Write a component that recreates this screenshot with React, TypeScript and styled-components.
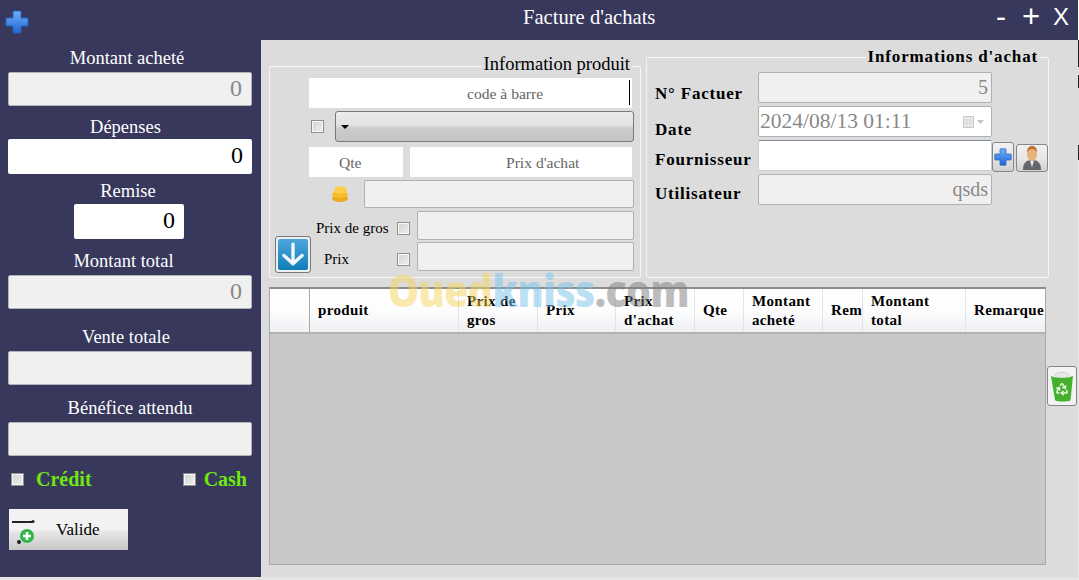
import React from "react";
import styled, { createGlobalStyle } from "styled-components";
import { Recycle } from "lucide-react";

const GlobalStyle = createGlobalStyle`
  html, body {
    margin: 0;
    padding: 0;
    background: #fff;
    font-family: "Liberation Serif", "Times New Roman", serif;
  }
`;

const Page = styled.div`
  position: relative;
  width: 1079px;
  height: 580px;
  overflow: hidden;
  display: flex;
`;

const Window = styled.div`
  width: 1078px;
  height: 580px;
  display: flex;
  flex-direction: column;
  background: #e4e4e4;
`;

const EdgeStrip = styled.div`
  width: 1px;
  height: 580px;
  background: linear-gradient(
    #fff 0 40px,
    #222 40px 67px,
    #ddd 67px 75px,
    #222 75px 88px,
    #ddd 88px 145px,
    #222 145px 160px,
    #e8e8e8 160px
  );
`;

const TitleBar = styled.div`
  height: 40px;
  flex: none;
  background: #37385c;
  display: flex;
  align-items: center;
  color: #fff;
  padding-left: 5px;
`;

const TitleIcon = styled.div`
  display: flex;
  margin-top: 4px;
`;

const Title = styled.div`
  margin-left: 494px;
  font-size: 20.6px;
  margin-top: -5px;
`;

const WindowControls = styled.div`
  margin-left: auto;
  margin-right: 9px;
  margin-top: -6px;
  display: flex;
  align-items: center;
  gap: 13px;
  font-family: "Liberation Sans", Arial, sans-serif;
  font-size: 24px;
  line-height: 24px;
`;

const Minus = styled.span`
  font-size: 30px;
  margin-right: 3px;
`;

const Plus = styled.span`
  font-size: 31px;
  line-height: 24px;
`;

const Body = styled.div`
  height: 537px;
  flex: none;
  display: flex;
`;

const Sidebar = styled.aside`
  width: 261px;
  flex: none;
  background: #37385c;
  padding: 8px 9px 0 8px;
  box-sizing: border-box;
  display: flex;
  flex-direction: column;
`;

const FieldGroup = styled.div<{ $top: number; $gap: number }>`
  margin-top: ${(p) => p.$top}px;
  display: flex;
  flex-direction: column;
  align-items: center;
  gap: ${(p) => p.$gap}px;
`;

const SideLabel = styled.div<{ $nudge: number }>`
  height: 20px;
  line-height: 20px;
  font-size: 18.5px;
  color: #fff;
  text-align: center;
  padding-right: ${(p) => p.$nudge}px;
`;

const SideField = styled.div<{ $white?: boolean; $narrow?: boolean }>`
  width: ${(p) => (p.$narrow ? "110px" : "100%")};
  height: ${(p) => (p.$white ? 35 : 34)}px;
  margin-right: ${(p) => (p.$narrow ? 2 : 0)}px;
  box-sizing: border-box;
  display: flex;
  align-items: center;
  justify-content: flex-end;
  padding: 0 9px 2px 0;
  font-size: 24px;
  border-radius: 2px;
  color: ${(p) => (p.$white ? "#000" : "#888")};
  background: ${(p) => (p.$white ? "#fff" : "#f0f0f0")};
  border: ${(p) => (p.$white ? "none" : "1px solid #b4b4b8")};
`;

const PayRow = styled.div`
  margin-top: 13px;
  height: 20px;
  display: flex;
  align-items: center;
  padding: 0 5px 0 3px;
`;

const PayOption = styled.div<{ $push?: boolean; $gap: number }>`
  display: flex;
  align-items: center;
  gap: ${(p) => p.$gap}px;
  margin-left: ${(p) => (p.$push ? "auto" : 0)};
`;

const PayLabel = styled.span`
  color: #6fe80f;
  font-weight: bold;
  font-size: 20px;
`;

const Check = styled.span`
  display: block;
  flex: none;
  width: 13px;
  height: 13px;
  box-sizing: border-box;
  border: 1px solid #8e8f8f;
  background: linear-gradient(135deg, #d2d2d2, #eeeeee);
  box-shadow: inset 0 0 0 1px #f8f8f8;
`;

const PriceCheck = styled(Check)`
  margin-top: 5px;
`;

const ValidateButton = styled.button`
  margin: 20px 0 0 1px;
  width: 119px;
  height: 41px;
  padding: 0;
  border: none;
  display: flex;
  align-items: center;
  background: linear-gradient(#f2f2f2 0 50%, #e6e6e6 56%, #c8c8c8 100%);
  font-family: inherit;
  font-size: 17px;
  color: #000;
`;

const ValidateText = styled.span`
  margin-left: 15px;
`;

const Main = styled.main`
  flex: 1;
  background: #dcdcdc;
  padding-left: 8px;
  min-width: 0;
`;

const GroupRow = styled.div`
  display: flex;
  align-items: flex-start;
  gap: 5px;
  height: 247px;
`;

const Group = styled.fieldset<{ $width: number; $top: number; $height: number }>`
  width: ${(p) => p.$width}px;
  height: ${(p) => p.$height}px;
  margin: ${(p) => p.$top}px 0 0;
  padding: 0;
  box-sizing: border-box;
  border: 1px solid #f6f6f6;
  border-radius: 2px;
  min-width: 0;
`;

const ProductLegend = styled.legend`
  margin-left: auto;
  margin-right: 8px;
  padding: 0 2px;
  height: 22px;
  line-height: 18px;
  font-size: 18.5px;
  color: #000;
`;

const PurchaseLegend = styled.legend`
  margin-left: auto;
  margin-right: 8px;
  padding: 0 2px;
  height: 20px;
  line-height: 20px;
  font-size: 17px;
  font-weight: bold;
  letter-spacing: 0.85px;
  color: #000;
`;

const FormRow = styled.div<{ $top: number; $left: number; $gap?: number }>`
  display: flex;
  align-items: center;
  margin-top: ${(p) => p.$top}px;
  padding-left: ${(p) => p.$left}px;
  gap: ${(p) => p.$gap ?? 0}px;
`;

const HintField = styled.div<{ $width: number; $pad: number }>`
  position: relative;
  width: ${(p) => p.$width}px;
  height: 30px;
  box-sizing: border-box;
  background: #fff;
  padding-left: ${(p) => p.$pad}px;
  line-height: 31px;
  font-size: 15.6px;
  color: #666;
`;

const TextCaret = styled.i`
  position: absolute;
  right: 2px;
  top: 2px;
  width: 1px;
  height: 25px;
  background: #000;
`;

const Dropdown = styled.div`
  width: 299px;
  height: 31px;
  box-sizing: border-box;
  border: 1px solid #77787c;
  border-radius: 3px;
  background: linear-gradient(#ececec 0, #e2e2e2 45%, #cccccc 55%, #c4c4c4 100%);
  display: flex;
  align-items: center;
  padding-left: 5px;
`;

const DropArrow = styled.i`
  width: 0;
  height: 0;
  border-left: 4px solid transparent;
  border-right: 4px solid transparent;
  border-top: 4px solid #000;
`;

const ReadonlyField = styled.div<{ $width: number; $height: number }>`
  width: ${(p) => p.$width}px;
  height: ${(p) => p.$height}px;
  box-sizing: border-box;
  background: #f0f0f0;
  border: 1px solid #b0b0b0;
  border-radius: 2px;
  display: flex;
  align-items: center;
  justify-content: flex-end;
  padding-right: 3px;
  color: #888;
  font-size: 20px;
`;

const PriceBlock = styled.div`
  display: flex;
  align-items: flex-end;
  padding-left: 5px;
`;

const ArrowButton = styled.button`
  width: 36px;
  height: 37px;
  padding: 2px;
  box-sizing: border-box;
  border: 1px solid #77787c;
  border-radius: 3px;
  background: #efefef;
  display: flex;
  margin-bottom: -2px;
`;

const PriceGrid = styled.div`
  display: grid;
  grid-template-columns: 81px 20px 217px;
  grid-template-rows: 29px 29px;
  row-gap: 2px;
  align-items: center;
  padding: 0 0 0 5px;
`;

const PriceLabel = styled.div<{ $indent?: number }>`
  font-size: 15px;
  margin-top: 5px;
  padding-left: ${(p) => p.$indent ?? 0}px;
  color: #000;
`;

const PurchaseGrid = styled.div`
  display: grid;
  grid-template-columns: 103px 234px auto;
  grid-template-rows: 31px 31px 31px 31px;
  row-gap: 3px;
  margin: 5px 0 0 8px;
`;

const PurchaseLabel = styled.div<{ $shift: number }>`
  font-size: 17px;
  font-weight: bold;
  letter-spacing: 0.8px;
  color: #000;
  line-height: 20px;
  padding-top: ${(p) => p.$shift}px;
  white-space: nowrap;
`;

const DateField = styled.div`
  box-sizing: border-box;
  background: #fff;
  border: 1px solid #b0b0b0;
  border-radius: 2px;
  display: flex;
  align-items: center;
  justify-content: space-between;
  padding: 0 5px 0 1px;
  font-size: 21.5px;
  color: #888;
`;

const SupplierField = styled.div`
  box-sizing: border-box;
  background: #fff;
  border: 1px solid #c4d0d8;
  border-top-color: #7c8a98;
  border-radius: 2px;
`;

const SupplierTools = styled.div`
  display: flex;
  align-items: flex-end;
  gap: 2px;
  height: 32px;
`;

const IconButton = styled.button<{ $width: number; $height: number }>`
  width: ${(p) => p.$width}px;
  height: ${(p) => p.$height}px;
  padding: 0;
  box-sizing: border-box;
  border: 1px solid #85868a;
  border-radius: 3px;
  background: linear-gradient(#f0f0f0 0, #e8e8e8 50%, #d0d0d0 100%);
  display: flex;
  align-items: center;
  justify-content: center;
`;

const TableRow = styled.div`
  display: flex;
  align-items: flex-start;
  gap: 1px;
`;

const Table = styled.div`
  width: 777px;
  height: 278px;
  box-sizing: border-box;
  border: 1px solid #a8a8a8;
  border-top: 2px solid #8c8c8c;
  display: flex;
  flex-direction: column;
`;

const HeaderRow = styled.div`
  height: 43px;
  flex: none;
  display: grid;
  grid-template-columns: 40px 149px 79px 78px 79px 49px 79px 40px 103px 1fr;
  background: linear-gradient(#fff 0, #fdfdfe 50%, #eef0f3 100%);
  border-bottom: 2px solid #b4b4b4;
`;

const HeaderCell = styled.div<{ $strong?: boolean }>`
  display: flex;
  align-items: center;
  padding: 0 10px 0 8px;
  overflow: hidden;
  box-sizing: border-box;
  font-size: 15px;
  font-weight: bold;
  letter-spacing: 0.35px;
  line-height: 19px;
  color: #000;
  border-right: 1px solid ${(p) => (p.$strong ? "#a8a8a8" : "#e2e4e8")};
`;

const LastHeaderCell = styled(HeaderCell)`
  border-right: none;
  padding-right: 0;
  white-space: nowrap;
`;

const TableBody = styled.div`
  flex: 1;
  background: #c8c8c8;
`;

const TrashButton = styled(IconButton)`
  margin-top: 79px;
  background: #f2f2f2;
`;

const Watermark = styled.div`
  position: absolute;
  left: 388px;
  top: 260px;
  font-family: "Open Sans", "Noto Sans", sans-serif;
  font-weight: 800;
  font-size: 39px;
  line-height: 60px;
  letter-spacing: -0.5px;
  opacity: 0.5;
  transform: scaleY(1.15);
  pointer-events: none;
  white-space: nowrap;
`;

const Mark = styled.span<{ $color: string }>`
  color: ${(p) => p.$color};
`;

const CrossIcon = ({ size }: { size: number }) => (
  <svg width={size} height={size} viewBox="0 0 24 24">
    <defs>
      <linearGradient id={`cross${size}`} x1="0" y1="0" x2="0" y2="1">
        <stop offset="0" stopColor="#6fb0f5" />
        <stop offset="1" stopColor="#1f66d8" />
      </linearGradient>
    </defs>
    <path
      d="M9 1h6a1 1 0 0 1 1 1v6h6a1 1 0 0 1 1 1v6a1 1 0 0 1-1 1h-6v6a1 1 0 0 1-1 1H9a1 1 0 0 1-1-1v-6H2a1 1 0 0 1-1-1V9a1 1 0 0 1 1-1h6V2a1 1 0 0 1 1-1z"
      fill={`url(#cross${size})`}
      stroke="#2a64c0"
      strokeWidth="1"
    />
  </svg>
);

const CoinsIcon = () => (
  <svg width="18" height="18" viewBox="0 0 18 18">
    <ellipse cx="9" cy="13.5" rx="8" ry="3.5" fill="#eda91e" />
    <ellipse cx="9" cy="9.5" rx="8" ry="3.5" fill="#f5bd2c" />
    <ellipse cx="9.5" cy="5" rx="6.5" ry="3.8" fill="#f9cf4a" />
  </svg>
);

const ArrowIcon = () => (
  <svg width="30" height="31" viewBox="0 0 30 30" preserveAspectRatio="none">
    <defs>
      <linearGradient id="arrowFill" x1="0" y1="0" x2="0" y2="1">
        <stop offset="0" stopColor="#4ea6dc" />
        <stop offset="1" stopColor="#0f7fb8" />
      </linearGradient>
    </defs>
    <rect width="30" height="30" rx="2" fill="url(#arrowFill)" />
    <path
      d="M15 5v19M6 16l9 8 9-8"
      fill="none"
      stroke="#f2f8fc"
      strokeWidth="3.4"
      strokeLinecap="round"
      strokeLinejoin="round"
    />
  </svg>
);

const PersonIcon = () => (
  <svg width="24" height="26" viewBox="0 0 24 26">
    <path d="M3 25c0-7 3-10 9-10s9 3 9 10z" fill="#63666a" />
    <path d="M10 15.500h4l-2 7z" fill="#e8e8e8" />
    <ellipse cx="12" cy="9" rx="5" ry="7" fill="#e8b27a" />
    <path d="M7 8c0-5 2-7 5-7s5.500 2 5 7c-1-3-2.500-4-5-4s-4 1-5 4z" fill="#b8702c" />
  </svg>
);

const CalendarIcon = () => (
  <svg width="23" height="12" viewBox="0 0 23 12">
    <rect x="0.500" y="0.500" width="10" height="11" fill="#ececec" stroke="#c8c8c8" />
    <path d="M1 4h9M1 7h9M4 1v10M7 1v10" stroke="#d8d8d8" strokeWidth="1" />
    <path d="M14 4h7l-3.500 4z" fill="#c4c4c4" />
  </svg>
);

const ValidateIcon = () => (
  <svg width="32" height="41" viewBox="0 0 32 41">
    <path d="M3 13h20" stroke="#222" strokeWidth="2" />
    <circle cx="24" cy="12.500" r="1.600" fill="#222" />
    <circle cx="10" cy="33" r="2" fill="#222" />
    <circle cx="18" cy="27" r="7" fill="#2fb84a" />
    <path d="M18 23v8M14 27h8" stroke="#fff" strokeWidth="2.600" />
  </svg>
);

const TrashIcon = () => (
  <svg width="24" height="33" viewBox="0 0 24 33">
    <path d="M5 5c1-4 13-4 14 0l-2 3H7z" fill="#e6e8e4" stroke="#bbb" strokeWidth="0.500" />
    <path d="M1 6c5 2.500 17 2.500 22 0l-2.500 24c-.2 2-15 2-15.500 0z" fill="#46b02e" />
    <Recycle x={5} y={12} size={14} color="#e4f6dc" strokeWidth={2.6} />
  </svg>
);

const sideFields = [
  { label: "Montant acheté", value: "0", top: 0, gap: 4, nudge: 6 },
  { label: "Dépenses", value: "0", top: 11, gap: 2, white: true, nudge: 9 },
  { label: "Remise", value: "0", top: 7, gap: 3, white: true, narrow: true, nudge: 4 },
  { label: "Montant total", value: "0", top: 12, gap: 4, nudge: 13 },
  { label: "Vente totale", value: "", top: 18, gap: 4, nudge: 8 },
  { label: "Bénéfice attendu", value: "", top: 13, gap: 4, nudge: 0 },
];

const columns = [
  "produit",
  "Prix de gros",
  "Prix",
  "Prix d'achat",
  "Qte",
  "Montant acheté",
  "Rem",
  "Montant total",
];

export default function App() {
  return (
    <Page>
      <GlobalStyle />
      <Window>
        <TitleBar>
          <TitleIcon>
            <CrossIcon size={24} />
          </TitleIcon>
          <Title>Facture d'achats</Title>
          <WindowControls>
            <Minus>-</Minus>
            <Plus>+</Plus>
            <span>X</span>
          </WindowControls>
        </TitleBar>
        <Body>
          <Sidebar>
            {sideFields.map((f) => (
              <FieldGroup key={f.label} $top={f.top} $gap={f.gap}>
                <SideLabel $nudge={f.nudge}>{f.label}</SideLabel>
                <SideField $white={f.white} $narrow={f.narrow}>
                  {f.value}
                </SideField>
              </FieldGroup>
            ))}
            <PayRow>
              <PayOption $gap={12}>
                <Check />
                <PayLabel>Crédit</PayLabel>
              </PayOption>
              <PayOption $push $gap={8}>
                <Check />
                <PayLabel>Cash</PayLabel>
              </PayOption>
            </PayRow>
            <ValidateButton>
              <ValidateIcon />
              <ValidateText>Valide</ValidateText>
            </ValidateButton>
          </Sidebar>
          <Main>
            <GroupRow>
              <Group $width={372} $top={15} $height={223}>
                <ProductLegend>Information produit</ProductLegend>
                <FormRow $top={1} $left={39}>
                  <HintField $width={323} $pad={158}>
                    code à barre
                    <TextCaret />
                  </HintField>
                </FormRow>
                <FormRow $top={3} $left={41} $gap={11}>
                  <Check />
                  <Dropdown>
                    <DropArrow />
                  </Dropdown>
                </FormRow>
                <FormRow $top={5} $left={39} $gap={7}>
                  <HintField $width={94} $pad={30}>
                    Qte
                  </HintField>
                  <HintField $width={222} $pad={96}>
                    Prix d'achat
                  </HintField>
                </FormRow>
                <FormRow $top={3} $left={61} $gap={15}>
                  <CoinsIcon />
                  <ReadonlyField $width={270} $height={28} />
                </FormRow>
                <FormRow $top={3} $left={0}>
                  <PriceBlock>
                    <ArrowButton>
                      <ArrowIcon />
                    </ArrowButton>
                    <PriceGrid>
                      <PriceLabel>Prix de gros</PriceLabel>
                      <PriceCheck />
                      <ReadonlyField $width={217} $height={29} />
                      <PriceLabel $indent={8}>Prix</PriceLabel>
                      <PriceCheck />
                      <ReadonlyField $width={217} $height={29} />
                    </PriceGrid>
                  </PriceBlock>
                </FormRow>
              </Group>
              <Group $width={403} $top={7} $height={231}>
                <PurchaseLegend>Informations d'achat</PurchaseLegend>
                <PurchaseGrid>
                  <PurchaseLabel $shift={12}>N° Factuer</PurchaseLabel>
                  <ReadonlyField $width={234} $height={31}>
                    5
                  </ReadonlyField>
                  <span />
                  <PurchaseLabel $shift={14}>Date</PurchaseLabel>
                  <DateField>
                    2024/08/13 01:11
                    <CalendarIcon />
                  </DateField>
                  <span />
                  <PurchaseLabel $shift={10}>Fournisseur</PurchaseLabel>
                  <SupplierField />
                  <SupplierTools>
                    <IconButton $width={22} $height={30}>
                      <CrossIcon size={18} />
                    </IconButton>
                    <IconButton $width={32} $height={28}>
                      <PersonIcon />
                    </IconButton>
                  </SupplierTools>
                  <PurchaseLabel $shift={10}>Utilisateur</PurchaseLabel>
                  <ReadonlyField $width={234} $height={31}>
                    qsds
                  </ReadonlyField>
                  <span />
                </PurchaseGrid>
              </Group>
            </GroupRow>
            <TableRow>
              <Table>
                <HeaderRow>
                  <HeaderCell $strong />
                  {columns.map((c) => (
                    <HeaderCell key={c}>
                      <span>{c}</span>
                    </HeaderCell>
                  ))}
                  <LastHeaderCell>Remarque</LastHeaderCell>
                </HeaderRow>
                <TableBody />
              </Table>
              <TrashButton $width={30} $height={40}>
                <TrashIcon />
              </TrashButton>
            </TableRow>
          </Main>
        </Body>
      </Window>
      <EdgeStrip />
      <Watermark>
        <Mark $color="#f6d55c">Oued</Mark>
        <Mark $color="#79c3ea">kniss</Mark>
        <Mark $color="#7d7d7d">.com</Mark>
      </Watermark>
    </Page>
  );
}
